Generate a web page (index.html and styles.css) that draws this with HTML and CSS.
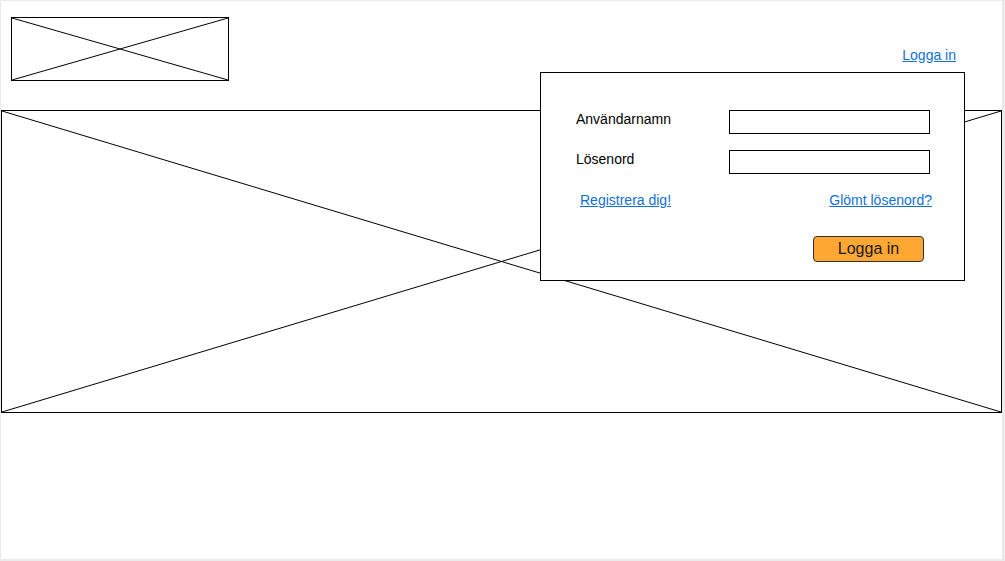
FILE: index.html
```html
<!DOCTYPE html>
<html>
<head>
    <meta charset="utf-8">
    <link rel="stylesheet" href="styles.css">
</head>
<body>
    <div class="page">
        <div class="top-row">
            <div class="placeholder logo">
                <svg class="cross" preserveAspectRatio="none">
                    <line x1="0" y1="0" x2="100%" y2="100%"/>
                    <line x1="0" y1="100%" x2="100%" y2="0"/>
                </svg>
            </div>
            <a href="#" class="top-link">Logga in</a>
        </div>

        <div class="placeholder banner">
            <svg class="cross" preserveAspectRatio="none">
                <line x1="0" y1="0" x2="100%" y2="100%"/>
                <line x1="0" y1="100%" x2="100%" y2="0"/>
            </svg>
        </div>

        <div class="login-box">
            <div class="field-grid">
                <label for="userField">Användarnamn</label>
                <input type="text" id="userField">
                <label for="passField">Lösenord</label>
                <input type="password" id="passField">
            </div>
            <div class="link-row">
                <a href="#" class="register-link">Registrera dig!</a>
                <a href="#" class="forgot-link">Glömt lösenord?</a>
            </div>
            <div class="button-row">
                <button id="loginButton">Logga in</button>
            </div>
        </div>
    </div>
</body>
</html>
```

FILE: styles.css
```css
body {
    margin: 0;
    background: #ebebeb;
    font-family: 'Liberation Sans', Arial, sans-serif;
    color: #000;
}

.page {
    position: relative;
    margin: 1px 0 0 1px;
    width: 1001px;
    height: 558px;
    background: #fff;
}

.top-row {
    display: flex;
    justify-content: space-between;
    align-items: flex-start;
    padding: 16px 46px 0 10px;
}

.placeholder {
    position: relative;
    box-sizing: border-box;
    border: 1px solid #000;
    background: #fff;
}

.cross {
    display: block;
    width: 100%;
    height: 100%;
}

.cross line {
    stroke: #000;
    stroke-width: 1;
}

.logo {
    width: 218px;
    height: 64px;
}

.top-link {
    margin-top: 30px;
    font-size: 14px;
    color: #1070d8;
}

.banner {
    margin-top: 29px;
    width: 1001px;
    height: 303px;
}

.login-box {
    position: absolute;
    left: 539px;
    top: 71px;
    box-sizing: border-box;
    width: 425px;
    height: 209px;
    padding: 37px 34px 0 35px;
    border: 1px solid #000;
    background: #fff;
}

.field-grid {
    display: grid;
    grid-template-columns: 153px 201px;
    row-gap: 16px;
}

label {
    margin-top: 1px;
    font-size: 14px;
    color: #000;
}

input {
    box-sizing: border-box;
    width: 201px;
    height: 24px;
    margin: 0;
    padding: 2px 4px;
    border: 1px solid #000;
    border-radius: 0;
    font-family: 'Liberation Sans', Arial, sans-serif;
    font-size: 14px;
}

input:focus {
    outline: none;
}

.link-row {
    display: flex;
    justify-content: space-between;
    margin: 18px -2px 0 4px;
    font-size: 14px;
}

.link-row a {
    color: #1070d8;
}

.button-row {
    display: flex;
    justify-content: flex-end;
    margin: 28px 6px 0 0;
}

#loginButton {
    box-sizing: border-box;
    width: 111px;
    height: 26px;
    padding: 0;
    border: 1px solid #333;
    border-radius: 4px;
    background: #ffa733;
    color: #1a1a1a;
    font-family: 'Liberation Sans', Arial, sans-serif;
    font-size: 16px;
    cursor: pointer;
}
```
